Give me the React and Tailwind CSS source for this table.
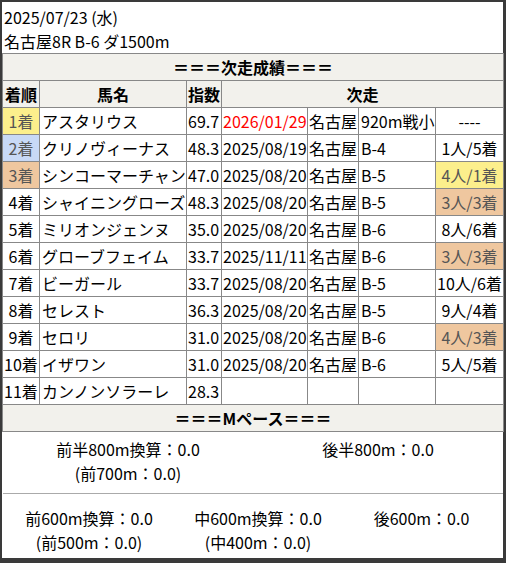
import React from "react";

const Y = "bg-[#fcef8c] text-[#555]";
const B = "bg-[#c8d9f6] text-[#555]";
const P = "bg-[#efc79f] text-[#555]";

const rows = [
  { r: "1着", rc: Y, name: "アスタリウス", idx: "69.7", date: "2026/01/29", red: true, venue: "名古屋", cls: "920m戦小", res: "----" },
  { r: "2着", rc: B, name: "クリノヴィーナス", idx: "48.3", date: "2025/08/19", venue: "名古屋", cls: "B-4", res: "1人/5着" },
  { r: "3着", rc: P, name: "シンコーマーチャン", idx: "47.0", date: "2025/08/20", venue: "名古屋", cls: "B-5", res: "4人/1着", resc: Y },
  { r: "4着", name: "シャイニングローズ", idx: "48.3", date: "2025/08/20", venue: "名古屋", cls: "B-5", res: "3人/3着", resc: P },
  { r: "5着", name: "ミリオンジェンヌ", idx: "35.0", date: "2025/08/20", venue: "名古屋", cls: "B-6", res: "8人/6着" },
  { r: "6着", name: "グローブフェイム", idx: "33.7", date: "2025/11/11", venue: "名古屋", cls: "B-6", res: "3人/3着", resc: P },
  { r: "7着", name: "ビーガール", idx: "33.7", date: "2025/08/20", venue: "名古屋", cls: "B-5", res: "10人/6着" },
  { r: "8着", name: "セレスト", idx: "36.3", date: "2025/08/20", venue: "名古屋", cls: "B-5", res: "9人/4着" },
  { r: "9着", name: "セロリ", idx: "31.0", date: "2025/08/20", venue: "名古屋", cls: "B-6", res: "4人/3着", resc: P },
  { r: "10着", name: "イザワン", idx: "31.0", date: "2025/08/20", venue: "名古屋", cls: "B-6", res: "5人/5着" },
  { r: "11着", name: "カンノンソラーレ", idx: "28.3", date: "", venue: "", cls: "", res: "" },
];

const td = "border border-[#888] h-[27px] p-0 whitespace-nowrap overflow-hidden";

export default function App() {
  return (
    <div className="w-[506px] h-[563px] bg-[#3a3a3a] pt-[2px] pl-[2px] font-['Noto_Sans_CJK_JP','Noto_Sans',sans-serif] text-[16px] leading-[24px] text-black">
      <div className="w-[501px] h-[556px] bg-white flex flex-col">
        <div className="pt-[3px] pl-[2px]">
          <div>2025/07/23 (水)</div>
          <div>名古屋8R B-6 ダ1500m</div>
        </div>
        <table className="table-fixed border-collapse w-[501px]">
          <colgroup>
            <col className="w-[37px]" />
            <col className="w-[147px]" />
            <col className="w-[35px]" />
            <col className="w-[86px]" />
            <col className="w-[51px]" />
            <col className="w-[77px]" />
            <col className="w-[68px]" />
          </colgroup>
          <tbody>
            <tr className="bg-[#f2f1ec]">
              <td colSpan={7} className={`${td} text-center font-bold`}>＝＝＝次走成績＝＝＝</td>
            </tr>
            <tr className="bg-[#f2f1ec] font-bold">
              <td className={`${td} text-center`}>着順</td>
              <td className={`${td} text-center`}>馬名</td>
              <td className={`${td} text-center`}>指数</td>
              <td colSpan={4} className={`${td} text-center`}>次走</td>
            </tr>
            {rows.map((r, i) => (
              <tr key={i}>
                <td className={`${td} text-center ${r.rc || ""}`}>{r.r}</td>
                <td className={`${td} pl-[2px]`}>{r.name}</td>
                <td className={`${td} pl-[1px]`}>{r.idx}</td>
                <td className={`${td} pl-[1px] ${r.red ? "text-[#ff0000]" : ""}`}>{r.date}</td>
                <td className={`${td} pl-[1px]`}>{r.venue}</td>
                <td className={`${td} pl-[2px]`}>{r.cls}</td>
                <td className={`${td} text-center ${r.resc || ""}`}>{r.res}</td>
              </tr>
            ))}
            <tr className="bg-[#f2f1ec]">
              <td colSpan={7} className={`${td} text-center font-bold`}>＝＝＝Mペース＝＝＝</td>
            </tr>
          </tbody>
        </table>
        <div className="grid grid-cols-2 pt-[5px] pb-[8px] border-b border-[#aaa] ml-[1px]">
          <div className="text-center">
            <div>前半800m換算：0.0</div>
            <div>(前700m：0.0)</div>
          </div>
          <div className="text-center">
            <div>後半800m：0.0</div>
          </div>
        </div>
        <div className="grid grid-cols-[174px_164px_163px] pt-[12px]">
          <div className="text-center">
            <div>前600m換算：0.0</div>
            <div>(前500m：0.0)</div>
          </div>
          <div className="text-center">
            <div>中600m換算：0.0</div>
            <div>(中400m：0.0)</div>
          </div>
          <div className="text-center">
            <div>後600m：0.0</div>
          </div>
        </div>
      </div>
    </div>
  );
}
